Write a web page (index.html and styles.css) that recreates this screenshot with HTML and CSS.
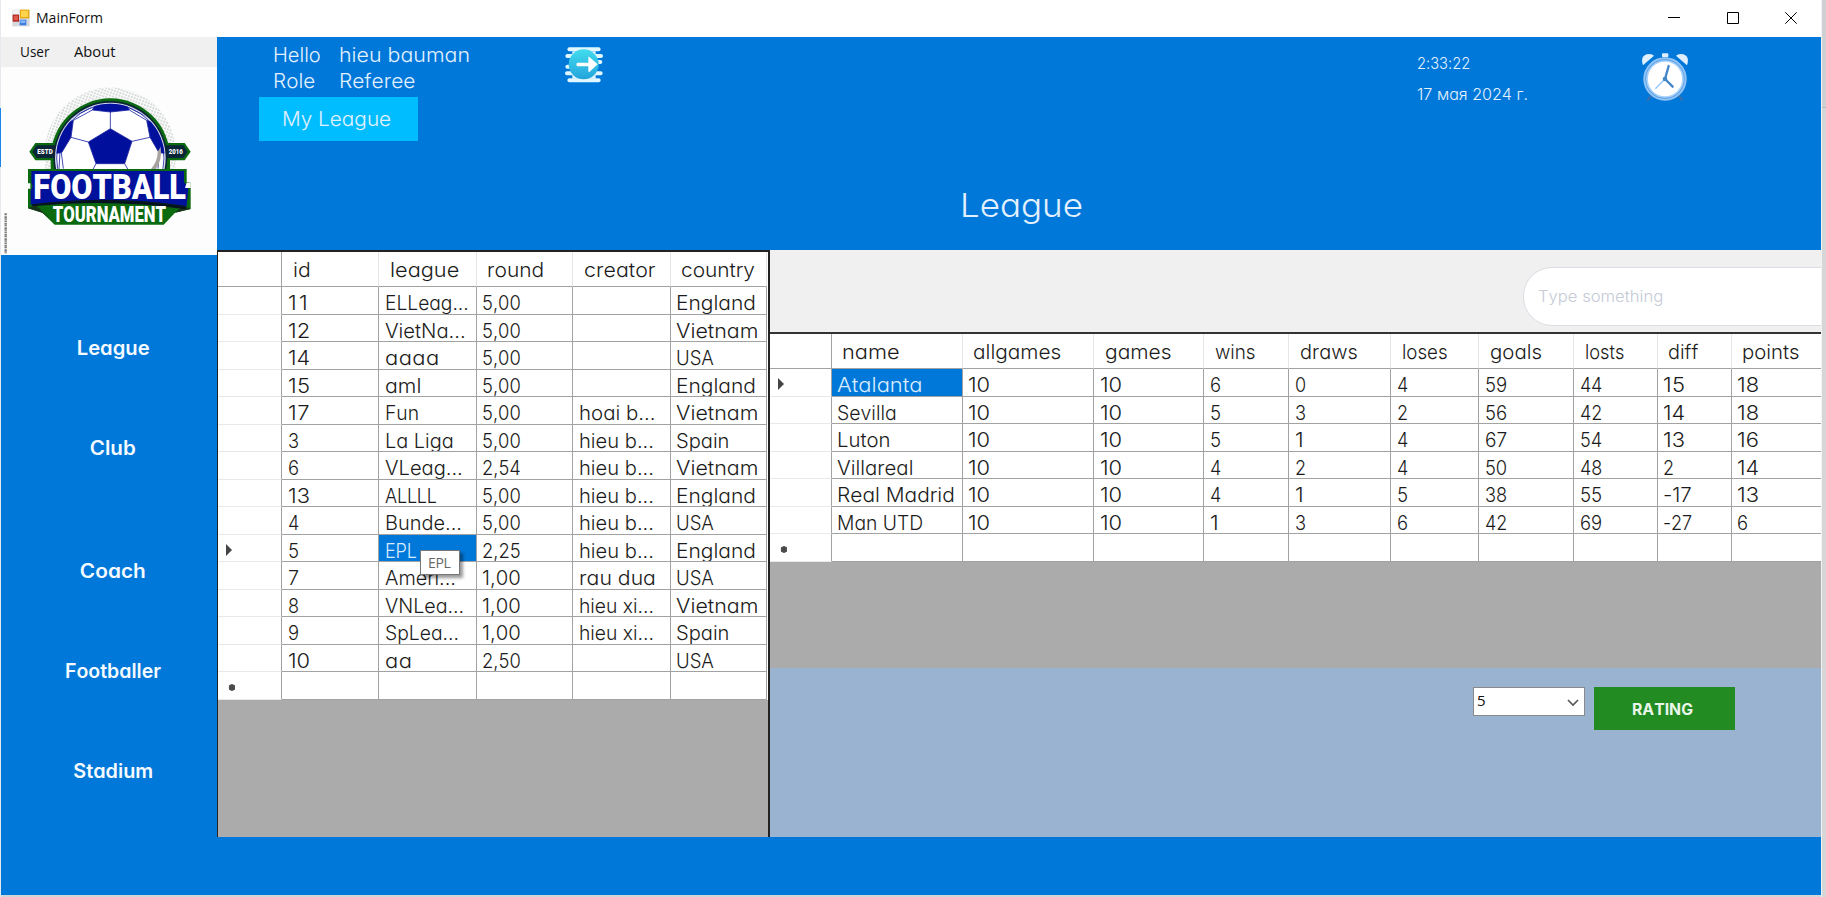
FILE: index.html
```html
<!DOCTYPE html>
<html lang="en">
<head>
<meta charset="utf-8">
<title>MainForm</title>
<link rel="stylesheet" href="styles.css">
</head>
<body>
<div class="desk-left"></div>
<div class="window">
  <div class="titlebar">
    <svg class="app-icon" viewBox="0 0 54 54">
      <rect x="1" y="2" width="52" height="50" fill="#d5d8dc"/>
      <rect x="2" y="3" width="20" height="12" fill="#f1f1f1"/>
      <rect x="24" y="2" width="28" height="26" fill="#e8a90c"/><rect x="27" y="5" width="21" height="19" fill="#ffd34d"/>
      <rect x="2" y="17" width="19" height="21" fill="#b3201c"/><rect x="5" y="20" width="13" height="14" fill="#dd5a4a"/>
      <rect x="23" y="32" width="20" height="17" fill="#3d7de0"/><rect x="25" y="34" width="15" height="8" fill="#82b4f8"/>
    </svg>
    <span class="app-title" data-w="67">MainForm</span>
    <div class="win-buttons">
      <svg viewBox="0 0 12 12"><path d="M0 5.5H12"/></svg>
      <svg viewBox="0 0 12 12"><path d="M.5 .5H11.5V11.5H.5Z"/></svg>
      <svg viewBox="0 0 12 12"><path d="M.3 .3L11.7 11.7M11.7 .3L.3 11.7"/></svg>
    </div>
  </div>
  <div class="body">
    <aside class="sidebar">
      <nav class="menu"><span data-w="29.5">User</span><span data-w="41.5">About</span></nav>
      <svg class="logo" viewBox="3 201 648 564">
        <defs>
          <pattern id="dots" width="9" height="9" patternUnits="userSpaceOnUse" patternTransform="rotate(20)"><circle cx="3" cy="3" r="1.7" fill="#4c6458"/></pattern>
          <clipPath id="ball"><circle cx="331" cy="474" r="163"/></clipPath>
        </defs>
        <path d="M135 508V440A197 197 0 0 1 527 440V508Z" fill="url(#dots)"/>
        <path d="M152 508V474A179 179 0 0 1 510 474V508Z" fill="#0b6a10"/>
        <path d="M88 455L106 429H168V481H106ZM572 455L554 429H492V481H554Z" fill="#0b6a10"/>
        <path d="M97 455L110 436H170V474H110ZM563 455L550 436H490V474H550Z" fill="#0a2438"/>
        <circle cx="331" cy="474" r="171" fill="#0a2438"/>
        <circle cx="331" cy="474" r="166" fill="#d5d9ee"/>
        <g clip-path="url(#ball)" stroke="#2129a5" stroke-width="2.5">
          <circle cx="331" cy="474" r="161" fill="#fff"/>
          <path fill="#00109c" d="M331 386L396 424L374 491H288L265 426ZM283 318Q331 300 382 318L388 330L331 336L277 330ZM186 374L220 361L213 412L185 458L170 460Q168 410 186 374ZM476 374L440 361L450 412L477 458L494 460Q494 410 476 374Z"/>
          <path fill="none" d="M331 336V386M396 424L450 412M265 426L213 412M288 491L278 510M374 491L385 510M277 330L220 361M388 330L440 361M184 458L190 506M180 456L177 508M477 458L474 506M220 350L275 322M440 350L385 322"/>
          <path d="M466 510Q488 480 482 440L473 455Q474 482 451 510Z" fill="#a9a49f" stroke="none"/>
        </g>
        <path d="M84 507H560V547L572 548V627L525 638L491 674H164L127 638L84 625V566H91V550H84Z" fill="#0b6a10"/>
        <path d="M84 625L127 638L150 656L108 616ZM572 627L525 638L505 656L550 616Z" fill="#17331a"/>
        <path d="M94 513H552V546L565 563L560 619Q330 583 92 614V573L98 558L94 548Z" fill="#00129c"/>
        <path d="M96 613Q330 583 557 618V628Q330 595 96 619Z" fill="#061321"/>
        <path d="M560 548H572V564H555Z" fill="#fff"/>
        <g class="logo-text">
          <text x="100" y="597" font-size="106" textLength="458" lengthAdjust="spacingAndGlyphs">FOOTBALL</text>
          <text x="158" y="665" font-size="64" textLength="340" lengthAdjust="spacingAndGlyphs">TOURNAMENT</text>
          <text x="112" y="463" font-size="24" textLength="46" lengthAdjust="spacingAndGlyphs">ESTD</text>
          <text x="506" y="463" font-size="24" textLength="42" lengthAdjust="spacingAndGlyphs">2016</text>
        </g>
        <path d="M17 640V760" stroke="#777" stroke-width="7" stroke-dasharray="5 2 3 1"/>
      </svg>
      <ul class="nav">
        <li data-w="73">League</li>
        <li data-w="46">Club</li>
        <li class="nav-gap" data-w="66">Coach</li>
        <li data-w="96">Footballer</li>
        <li data-w="80">Stadium</li>
      </ul>
    </aside>
    <main class="main">
      <header class="header">
        <div class="user">
          <div class="user-lines">
            <span data-cg>Hello</span><span data-cg>hieu bauman</span>
            <span data-cg>Role</span><span data-cg>Referee</span>
          </div>
          <div class="my-league"><span data-cg>My League</span></div>
        </div>
        <svg class="logout" viewBox="0 0 120 120">
          <defs><linearGradient id="teal" x2="0" y2="1"><stop stop-color="#42dcee"/><stop offset="1" stop-color="#23a4dc"/></linearGradient></defs>
          <g stroke="#e1f7ff" stroke-width="12" stroke-linecap="round"><path d="M19 16H107M13 36H114M25 54H112M13 68H100M12 88H113M19 109H107"/></g>
          <path d="M28 22H98V104H28Z" fill="#e1f7ff"/>
          <circle cx="62" cy="61" r="45" fill="url(#teal)"/>
          <path d="M43 56H76V39Q77 37 80 40L104 61L80 83Q77 85 76 82V67H43Q37 61 43 56Z" fill="#fff"/>
        </svg>
        <div class="title"><span data-cg>League</span></div>
        <div class="time"><div><span data-cg>2:33:22</span></div><div><span data-w="111">17 мая 2024 г.</span></div></div>
        <svg class="clock" viewBox="0 0 144 150">
          <path d="M31 130L19 146M113 130L125 146" stroke="#356fae" stroke-width="7"/>
          <path d="M6 40Q-3 14 17 7Q32 4 39 11ZM138 40Q147 14 127 7Q112 4 105 11Z" fill="#e0efff"/>
          <rect x="63" y="4" width="19" height="12" rx="3" fill="#e0efff"/>
          <circle cx="72" cy="81" r="64" fill="#5d9ee5"/><circle cx="72" cy="81" r="62" fill="none" stroke="#91c4f6" stroke-width="6"/>
          <circle cx="72" cy="81" r="54" fill="#fff" stroke="#a6d1fb" stroke-width="5"/>
          <path d="M72 81L43 110" stroke="#8ec5fa" stroke-width="4"/>
          <path d="M83 42L72 81L95 104" stroke="#4386c8" stroke-width="7" fill="none" stroke-linecap="round"/><circle cx="72" cy="81" r="7" fill="#4386c8"/>
        </svg>
      </header>
      <div class="content">
        <section class="left-pane"><div class="table leagues" id="leagues"></div></section>
        <section class="right-pane">
          <div class="search-row"><div class="search"><span data-cg>Type something</span></div></div>
          <div class="standings-wrap"><div class="table standings" id="standings"></div></div>
          <div class="rating-row">
            <div class="combo"><span>5</span><svg viewBox="0 0 12 8"><path d="M1 1L6 6L11 1"/></svg></div>
            <div class="rating"><span data-w="61">RATING</span></div>
          </div>
        </section>
      </div>
      <footer class="footer"></footer>
    </main>
  </div>
</div>
<div class="tooltip">EPL</div>
<div class="desk-right"></div>
<script src="app.js"></script>
</body>
</html>
```
FILE: styles.css
```css
* { box-sizing: border-box; }
body {
  margin: 0; width: 1826px; height: 897px; overflow: hidden; position: relative;
  display: grid; grid-template-columns: 1px 1820px 5px;
  background: #d4d5d8; color: #1c1c20;
  font-family: Inter, "Open Sans", sans-serif; font-weight: 300; font-size: 20px;
  font-feature-settings: "cv11", "kern" 0, "calt" 0; font-kerning: none;
}
.desk-left { background: linear-gradient(#e6e9ee 108px, #1b86ea 108px 167px, #e6e9ee 167px); }
.desk-right { background: linear-gradient(#cfd0d4 107px, #b9babd 107px 108px, #d6d6d6 108px); border-left: 1px solid #f2f2f2; }
.window { height: 895px; display: flex; flex-direction: column; overflow: hidden; }
.titlebar { height: 37px; flex: none; background: #fff; display: flex; align-items: center; padding: 0 24px 0 11px; }
.app-icon { width: 18px; height: 18px; margin: 0 6px 2px 0; }
.app-title { font: 400 15px "Open Sans", sans-serif; color: #111; padding-bottom: 3px; white-space: nowrap; }
.win-buttons { margin-left: auto; display: flex; gap: 46.5px; padding-bottom: 1px; }
.win-buttons svg { width: 12px; height: 12px; overflow: visible; fill: none; stroke: #000; stroke-width: 1; }
[data-cg], [data-w] { display: inline-block; transform-origin: 0 50%; white-space: nowrap; }

.body { flex: 1; display: flex; min-height: 0; }
.sidebar { width: 216px; flex: none; background: #0078d9; display: flex; flex-direction: column; }
.menu { height: 30px; background: #f0f0f0; display: flex; gap: 22px; padding: 4px 0 0 18.5px; font: 400 15px/21px "Open Sans", sans-serif; color: #111; }
.logo { width: 216px; height: 188px; background: #fdfdfd; flex: none; }
.logo-text { font-family: "Roboto", sans-serif; font-weight: 900; fill: #fff; }
.nav { list-style: none; margin: 0; padding: 43px 0 0 8px; color: #f4faff; font-weight: 600; font-size: 19.5px; display: flex; flex-direction: column; align-items: center; }
.nav li { height: 100px; line-height: 100px; transform-origin: 50% 50%; }
.nav .nav-gap { margin-top: 22.5px; }

.main { flex: 1; min-width: 0; background: #0078d9; display: flex; flex-direction: column; }
.header { height: 213px; flex: none; display: flex; align-items: flex-start; color: #e3f1ff; white-space: nowrap; padding-left: 41.5px; }
.user { width: 159px; padding-top: 5px; }
.user-lines { display: grid; grid-template-columns: 66px 160px; justify-items: start; line-height: 26.3px; padding: 0 0 2.4px 14px; height: 55px; }
.my-league { height: 44px; background: #00bdff; line-height: 44px; padding: 0 0 0 23px; }
.logout { width: 40px; height: 40px; margin: 7px 0 0 145px; }
.title { font-size: 33px; line-height: 40px; margin: 148px 0 0 357px; width: 124px; }
.time { font-size: 16px; width: 247px; margin: 10.5px 0 0 333.5px; line-height: 31px; }
.clock { width: 48px; height: 50px; margin-top: 15px; margin-left: -23px; }

.content { height: 587px; flex: none; display: flex; }
.left-pane { width: 552.5px; flex: none; background: #ababab; border: 1px solid #222; border-width: 2px 2px 0 1px; }
.table { display: grid; white-space: nowrap; background: #fff; }
.leagues { grid-template-columns: 64px 97.4px 97.4px 96.4px 97.4px 96.9px; grid-template-rows: 35px repeat(15, 27.53px); }
.standings { grid-template-columns: 62px 131.4px 131.6px 110px 85px 101.9px 87.9px 94.9px 83.6px 74.1px 91px; grid-template-rows: 35px repeat(7, 27.53px); }
.cell { border-right: 1px solid #a2a2a2; border-bottom: 1px solid #a2a2a2; padding: 6px 0 0 5.5px; overflow: hidden; }
.cell span { display: block; width: max-content; line-height: 20px; }
.cell.head { border-right-color: #e6e6e6; padding: 8px 0 0 10.5px; }
.cell.head.corner { border-right-color: #a2a2a2; }
.cell.rowhead { border-bottom-color: #e9e9e9; padding: 9px 0 0 7px; }
.cell.rowhead svg { display: block; width: 10px; height: 12px; }
.cell.selected { background: #0078d9; color: #d9ecff; }

.right-pane { flex: 1; min-width: 0; display: flex; flex-direction: column; overflow: hidden; }
.search-row { height: 82px; flex: none; background: #f0f0f0; padding: 17px 0 0 753.5px; }
.search { width: 340px; height: 59px; background: #fff; border: 1px solid #dadde3; border-radius: 29px; padding-left: 14px; font-size: 16.4px; line-height: 57px; color: #c4cad6; }
.standings-wrap { height: 336px; flex: none; background: #ababab; border-top: 2px solid #333; overflow: hidden; }
.rating-row { flex: 1; background: #99b3d1; display: flex; align-items: flex-start; padding: 19px 0 0 703.5px; gap: 9px; }
.combo { width: 112px; height: 29px; background: #fff; border: 1px solid #8a8a8a; display: flex; justify-content: space-between; font: 400 15px/25px "Open Sans", sans-serif; color: #111; padding: 0 5px 0 3px; }
.combo svg { width: 12px; height: 8px; margin-top: 11px; fill: none; stroke: #555; stroke-width: 1.6; }
.rating { width: 141px; height: 43px; background: #228b22; color: #eaf6ea; font-weight: 700; font-size: 15.5px; line-height: 45px; padding-left: 38px; }
.footer { flex: 1; }
.tooltip { position: absolute; left: 420px; top: 550px; width: 40px; height: 25px; border: 1px solid #777; background: #fff; color: #666; font: 400 14px/23px "Open Sans", sans-serif; padding-left: 7px; box-shadow: 3px 3px 3px rgba(0,0,0,.4); letter-spacing: -.4px; }
```
FILE: app.js
```js
const ARROW = '<svg viewBox="0 0 10 12"><path d="M1 0L7 6L1 12Z" fill="#444"/></svg>';
const STAR = '<svg viewBox="0 0 10 12"><circle cx="7" cy="6.5" r="3.2" fill="#555"/><path d="M7 3V10M4 4.5L10 8.5M4 8.5L10 4.5" stroke="#444"/></svg>';

function build(id, heads, rows, current) {
  let html = '<div class="cell head corner"></div>' +
    heads.map(h => `<div class="cell head"><span data-cg>${h}</span></div>`).join('');
  [...rows, heads.map(() => '')].forEach((r, i) => {
    const mark = i === rows.length ? STAR : i === current[0] ? ARROW : '';
    html += `<div class="cell rowhead">${mark}</div>` + r.map((c, j) =>
      `<div class="cell${i === current[0] && j === current[1] ? ' selected' : ''}"><span data-cg>${c}</span></div>`).join('');
  });
  document.getElementById(id).innerHTML = html;
}

build('leagues', ['id', 'league', 'round', 'creator', 'country'], [
  ['11', 'ELLeag...', '5,00', '', 'England'],
  ['12', 'VietNa...', '5,00', '', 'Vietnam'],
  ['14', 'aaaa', '5,00', '', 'USA'],
  ['15', 'aml', '5,00', '', 'England'],
  ['17', 'Fun', '5,00', 'hoai b...', 'Vietnam'],
  ['3', 'La Liga', '5,00', 'hieu b...', 'Spain'],
  ['6', 'VLeag...', '2,54', 'hieu b...', 'Vietnam'],
  ['13', 'ALLLL', '5,00', 'hieu b...', 'England'],
  ['4', 'Bunde...', '5,00', 'hieu b...', 'USA'],
  ['5', 'EPL', '2,25', 'hieu b...', 'England'],
  ['7', 'Ameri...', '1,00', 'rau dua', 'USA'],
  ['8', 'VNLea...', '1,00', 'hieu xi...', 'Vietnam'],
  ['9', 'SpLea...', '1,00', 'hieu xi...', 'Spain'],
  ['10', 'aa', '2,50', '', 'USA']
], [9, 1]);

build('standings', ['name', 'allgames', 'games', 'wins', 'draws', 'loses', 'goals', 'losts', 'diff', 'points'], [
  ['Atalanta', '10', '10', '6', '0', '4', '59', '44', '15', '18'],
  ['Sevilla', '10', '10', '5', '3', '2', '56', '42', '14', '18'],
  ['Luton', '10', '10', '5', '1', '4', '67', '54', '13', '16'],
  ['Villareal', '10', '10', '4', '2', '4', '50', '48', '2', '14'],
  ['Real Madrid', '10', '10', '4', '1', '5', '38', '55', '-17', '13'],
  ['Man UTD', '10', '10', '1', '3', '6', '42', '69', '-27', '6']
], [0, 0]);

// Advance widths (1/1000 em) of a geometric sans; each label is stretched to the width they give.
const ADV = {' ':277,a:683,b:682,c:647,d:685,e:650,f:314,g:673,h:610,i:200,j:203,k:502,l:200,m:938,n:610,o:655,p:682,q:682,r:301,s:388,t:339,u:608,v:554,w:831,x:480,y:536,z:425,
  A:740,B:574,C:813,D:744,E:536,F:485,G:872,H:683,I:226,J:482,K:591,L:462,M:919,N:740,O:869,P:592,R:607,S:498,T:426,U:655,V:702,W:960,Y:592,'.':240,',':277,':':277,'-':332};
document.querySelectorAll('[data-cg],[data-w]').forEach(el => {
  const text = el.textContent;
  if (!text) return;
  const size = parseFloat(getComputedStyle(el).fontSize);
  const target = el.dataset.w ? +el.dataset.w : [...text].reduce((s, c) => s + (ADV[c] || 554), 0) * size / 1000;
  const range = document.createRange();
  range.selectNodeContents(el);
  const natural = range.getBoundingClientRect().width;
  const scale = Math.min(1.1, Math.max(0.9, target / natural));
  el.style.letterSpacing = (target / scale - natural) / text.length + 'px';
  el.style.transform = `scaleX(${scale})`;
});
```
